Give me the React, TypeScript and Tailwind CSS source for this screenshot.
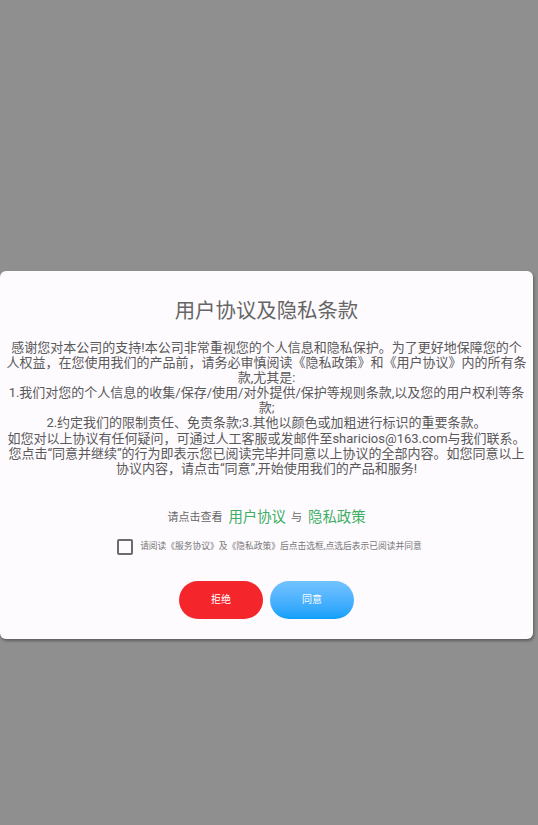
import React from 'react';

const font = { fontFamily: 'Roboto, "Noto Sans CJK SC", sans-serif' };

const App: React.FC = () => {
  return (
    <div className="min-h-[825px] w-[538px] bg-[#8f8f8f] pt-[271px]" style={font}>
      <div className="w-[533px] bg-[#fefbff] rounded-[6px] shadow-[1px_2px_3px_rgba(0,0,0,0.35)] pt-[28px] pb-[20px] flex flex-col items-center">
        <h2 className="text-[20.4px] leading-[24px] text-[#666666]">用户协议及隐私条款</h2>

        <p className="mt-[17px] w-[522px] text-center text-[13px] leading-[15.1px] text-[#595959] whitespace-pre-line">
          {'感谢您对本公司的支持!本公司非常重视您的个人信息和隐私保护。为了更好地保障您的个人权益，在您使用我们的产品前，请务必审慎阅读《隐私政策》和《用户协议》内的所有条款,尤其是:\n1.我们对您的个人信息的收集/保存/使用/对外提供/保护等规则条款,以及您的用户权利等条款;\n2.约定我们的限制责任、免责条款;3.其他以颜色或加粗进行标识的重要条款。\n如您对以上协议有任何疑问，可通过人工客服或发邮件至sharicios@163.com与我们联系。\n您点击“同意并继续”的行为即表示您已阅读完毕并同意以上协议的全部内容。如您同意以上协议内容，请点击“同意”,开始使用我们的产品和服务!'}
        </p>

        <div className="mt-[32px] flex items-center h-[20px]">
          <span className="text-[11px] text-[#666666]">请点击查看</span>
          <span className="ml-[6px] text-[14.4px] text-[#3dae63]">用户协议</span>
          <span className="ml-[5px] text-[11px] text-[#666666]">与</span>
          <span className="ml-[6px] text-[14.4px] text-[#3dae63]">隐私政策</span>
        </div>

        <label className="mt-[11px] ml-[6px] flex items-center h-[16px]">
          <span className="w-[16px] h-[16px] rounded-[2px] border-2 border-[#6b6b6b] bg-transparent" />
          <span className="ml-[7px] text-[8.75px] text-[#777777]">
            请阅读《服务协议》及《隐私政策》后点击选框,点选后表示已阅读并同意
          </span>
        </label>

        <div className="mt-[26px] flex gap-[7px]">
          <button className="w-[84px] h-[38px] rounded-full bg-[#f4262b] text-white text-[10px]">
            拒绝
          </button>
          <button className="w-[84px] h-[38px] rounded-full bg-gradient-to-b from-[#72c3ff] to-[#0aa0fb] text-white text-[10px]">
            同意
          </button>
        </div>
      </div>
    </div>
  );
};

export default App;
